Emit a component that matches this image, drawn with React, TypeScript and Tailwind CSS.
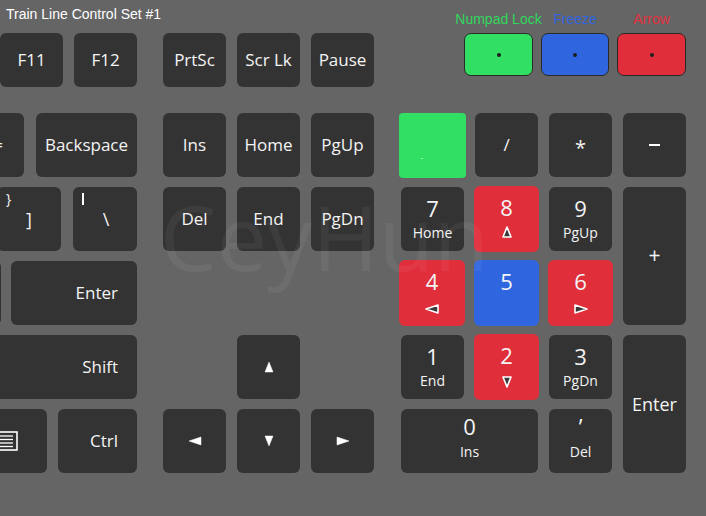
import type { ReactNode } from "react";

const KEY = "bg-[#333333] rounded-[6px] text-[#f4f4f4] shrink-0 flex items-center";

function Tri({ dir, filled }: { dir: "up" | "down" | "left" | "right"; filled?: boolean }) {
  const horiz = dir === "left" || dir === "right";
  const w = horiz ? 14 : 10;
  const h = horiz ? 10 : 12;
  const pts = {
    up: "5,1 9,11 1,11",
    down: "1,1 9,1 5,11",
    left: "1,5 13,1 13,9",
    right: "13,5 1,1 1,9",
  }[dir];
  return (
    <svg width={w} height={h} viewBox={`0 0 ${w} ${h}`}>
      <polygon
        points={pts}
        fill={filled ? "#ffffff" : "#3a3a3a"}
        stroke="#ffffff"
        strokeWidth={filled ? 0.5 : 1.6}
        strokeLinejoin="round"
      />
    </svg>
  );
}

function NumKey({
  top,
  sub,
  color = "bg-[#333333]",
  low,
  className = "",
}: {
  top: string;
  sub?: ReactNode;
  color?: string;
  low?: boolean;
  className?: string;
}) {
  return (
    <div className={`${color} rounded-[6px] text-[#f4f4f4] flex flex-col items-center ${low ? "pt-[5px]" : "pt-[9px]"} ${className}`}>
      <span className="text-[22px] leading-[24px]">{top}</span>
      {sub && (
        <span className={`text-[14px] leading-[16px] h-[16px] flex items-center ${low ? "mt-[6px]" : "mt-[5px]"}`}>{sub}</span>
      )}
    </div>
  );
}

function Indicator({ label, text, fill, w }: { label: string; text: string; fill: string; w: string }) {
  return (
    <div className={`flex flex-col items-center ${w}`}>
      <span className={`whitespace-nowrap text-[14px] leading-[18px] ${text}`}>{label}</span>
      <div className={`mt-[5px] h-[43px] w-full ${fill} border border-[#2a2a2a] rounded-[7px] flex items-center justify-center`}>
        <div className="w-[4px] h-[4px] rounded-full bg-[#1e1e1e]" />
      </div>
    </div>
  );
}

export default function App() {
  return (
    <div className="relative w-[706px] h-[516px] overflow-hidden bg-[#656565] font-['Open_Sans',sans-serif] text-[17px]">
      {/* Header + function row */}
      <div className="flex">
        <div className="flex flex-col">
          <div className="h-[33px] pl-[6px] pt-[5px] text-[14px] leading-[18px] text-white font-['Liberation_Sans',Arial,sans-serif]">
            Train Line Control Set #1
          </div>
          <div className="flex h-[54px]">
            <div className="w-[137px] flex justify-end gap-[11px]">
              <div className={`${KEY} w-[63px] justify-center`}>F11</div>
              <div className={`${KEY} w-[63px] justify-center`}>F12</div>
            </div>
            <div className="ml-[26px] flex gap-[11px]">
              <div className={`${KEY} w-[63px] justify-center`}>PrtSc</div>
              <div className={`${KEY} w-[63px] justify-center`}>Scr Lk</div>
              <div className={`${KEY} w-[63px] justify-center`}>Pause</div>
            </div>
          </div>
        </div>
        <div className="ml-[90px] pt-[10px] flex gap-[8px] font-['Liberation_Sans',Arial,sans-serif]">
          <Indicator label="Numpad Lock" text="text-[#30d85e]" fill="bg-[#31df62]" w="w-[69px]" />
          <Indicator label="Freeze" text="text-[#2f63df]" fill="bg-[#2f65df]" w="w-[68px]" />
          <Indicator label="Arrow" text="text-[#e2303d]" fill="bg-[#e02e3b]" w="w-[69px]" />
        </div>
      </div>

      {/* Keyboard */}
      <div className="flex pt-[26px]">
        {/* Main block (clipped on the left) */}
        <div className="w-[137px] flex flex-col gap-[10px]">
          <div className="h-[64px] flex justify-end gap-[12px]">
            <div className={`${KEY} w-[64px] justify-end pr-[21px]`}>=</div>
            <div className={`${KEY} w-[101px] justify-center`}>Backspace</div>
          </div>
          <div className="h-[64px] flex justify-end gap-[12px]">
            <div className={`${KEY} w-[64px] justify-center relative`}>
              <span className="absolute left-[9px] top-[4px] text-[14px] leading-[16px]">{"}"}</span>
              <span className="text-[18px]">]</span>
            </div>
            <div className={`${KEY} w-[64px] justify-center relative`}>
              <div className="absolute left-[9px] top-[6px] w-[1.5px] h-[12px] bg-white" />
              <span className="text-[18px] pl-[2px]">\</span>
            </div>
          </div>
          <div className="h-[64px] flex justify-end gap-[10px]">
            <div className={`${KEY} w-[64px]`} />
            <div className={`${KEY} w-[126px] justify-end pr-[19px]`}>Enter</div>
          </div>
          <div className="h-[64px] flex justify-end">
            <div className={`${KEY} w-[170px] justify-end pr-[19px]`}>Shift</div>
          </div>
          <div className="h-[64px] flex justify-end gap-[11px]">
            <div className={`${KEY} w-[76px] justify-end pr-[29px]`}>
              <svg width="24" height="20" viewBox="0 0 24 20">
                <rect x="1" y="1" width="22" height="18" fill="none" stroke="#fff" strokeWidth="1.6" />
                <line x1="5" y1="5" x2="19" y2="5" stroke="#fff" strokeWidth="1.3" />
                <line x1="5" y1="8.5" x2="19" y2="8.5" stroke="#fff" strokeWidth="1.3" />
                <line x1="5" y1="12" x2="19" y2="12" stroke="#fff" strokeWidth="1.3" />
                <line x1="5" y1="15.5" x2="19" y2="15.5" stroke="#fff" strokeWidth="1.3" />
              </svg>
            </div>
            <div className={`${KEY} w-[79px] justify-end pr-[19px]`}>Ctrl</div>
          </div>
        </div>

        {/* Navigation block */}
        <div className="ml-[26px] grid grid-cols-[repeat(3,63px)] grid-rows-[repeat(5,64px)] gap-x-[11px] gap-y-[10px]">
          <div className={`${KEY} justify-center`}>Ins</div>
          <div className={`${KEY} justify-center`}>Home</div>
          <div className={`${KEY} justify-center`}>PgUp</div>
          <div className={`${KEY} justify-center`}>Del</div>
          <div className={`${KEY} justify-center`}>End</div>
          <div className={`${KEY} justify-center`}>PgDn</div>
          <div className="col-span-3" />
          <div className={`${KEY} justify-center col-start-2`}>
            <Tri dir="up" filled />
          </div>
          <div className={`${KEY} justify-center col-start-1`}>
            <Tri dir="left" filled />
          </div>
          <div className={`${KEY} justify-center`}>
            <Tri dir="down" filled />
          </div>
          <div className={`${KEY} justify-center`}>
            <Tri dir="right" filled />
          </div>
        </div>

        {/* Numpad */}
        <div className="ml-[27px] grid grid-cols-[repeat(4,63px)] grid-rows-[repeat(5,64px)] gap-x-[11px] gap-y-[10px]">
          <div className="bg-[#31df62] rounded-[4px] -mx-[2px] -mb-[1px] flex items-end pb-[19px] pl-[22px]">
            <div className="w-[2px] h-[1px] bg-white/60" />
          </div>
          <div className={`${KEY} justify-center`}>/</div>
          <div className={`${KEY} justify-center`}>
            <span className="mt-[5px] text-[20px]">*</span>
          </div>
          <div className={`${KEY} justify-center`}>
            <div className="w-[11px] h-[1.5px] bg-white" />
          </div>

          <NumKey top="7" sub="Home" />
          <NumKey top="8" sub={<Tri dir="up" />} color="bg-[#e02e3b]" className="-m-[1px]" />
          <NumKey top="9" sub="PgUp" />
          <div className={`${KEY} row-span-2 justify-center text-[21px]`}>+</div>

          <NumKey top="4" sub={<span className="pt-[6px]"><Tri dir="left" /></span>} color="bg-[#e02e3b]" className="-m-[1px] -ml-[2px]" />
          <NumKey top="5" color="bg-[#2f65df]" className="-m-[1px]" />
          <NumKey top="6" sub={<span className="pt-[6px]"><Tri dir="right" /></span>} color="bg-[#e02e3b]" className="-m-[1px]" />

          <NumKey top="1" sub="End" />
          <NumKey top="2" sub={<span className="pt-[3px]"><Tri dir="down" /></span>} color="bg-[#e02e3b]" className="-m-[1px]" />
          <NumKey top="3" sub="PgDn" />
          <div className={`${KEY} row-span-2 justify-center text-[18px]`}>Enter</div>

          <NumKey top="0" sub="Ins" low className="col-span-2" />
          <NumKey top="’" sub="Del" low />
        </div>
      </div>

      {/* Watermark */}
      <div className="pointer-events-none absolute left-[160px] top-[186px] text-[90px] leading-[100px] text-white/[0.05] select-none">
        CeyHun
      </div>
    </div>
  );
}
